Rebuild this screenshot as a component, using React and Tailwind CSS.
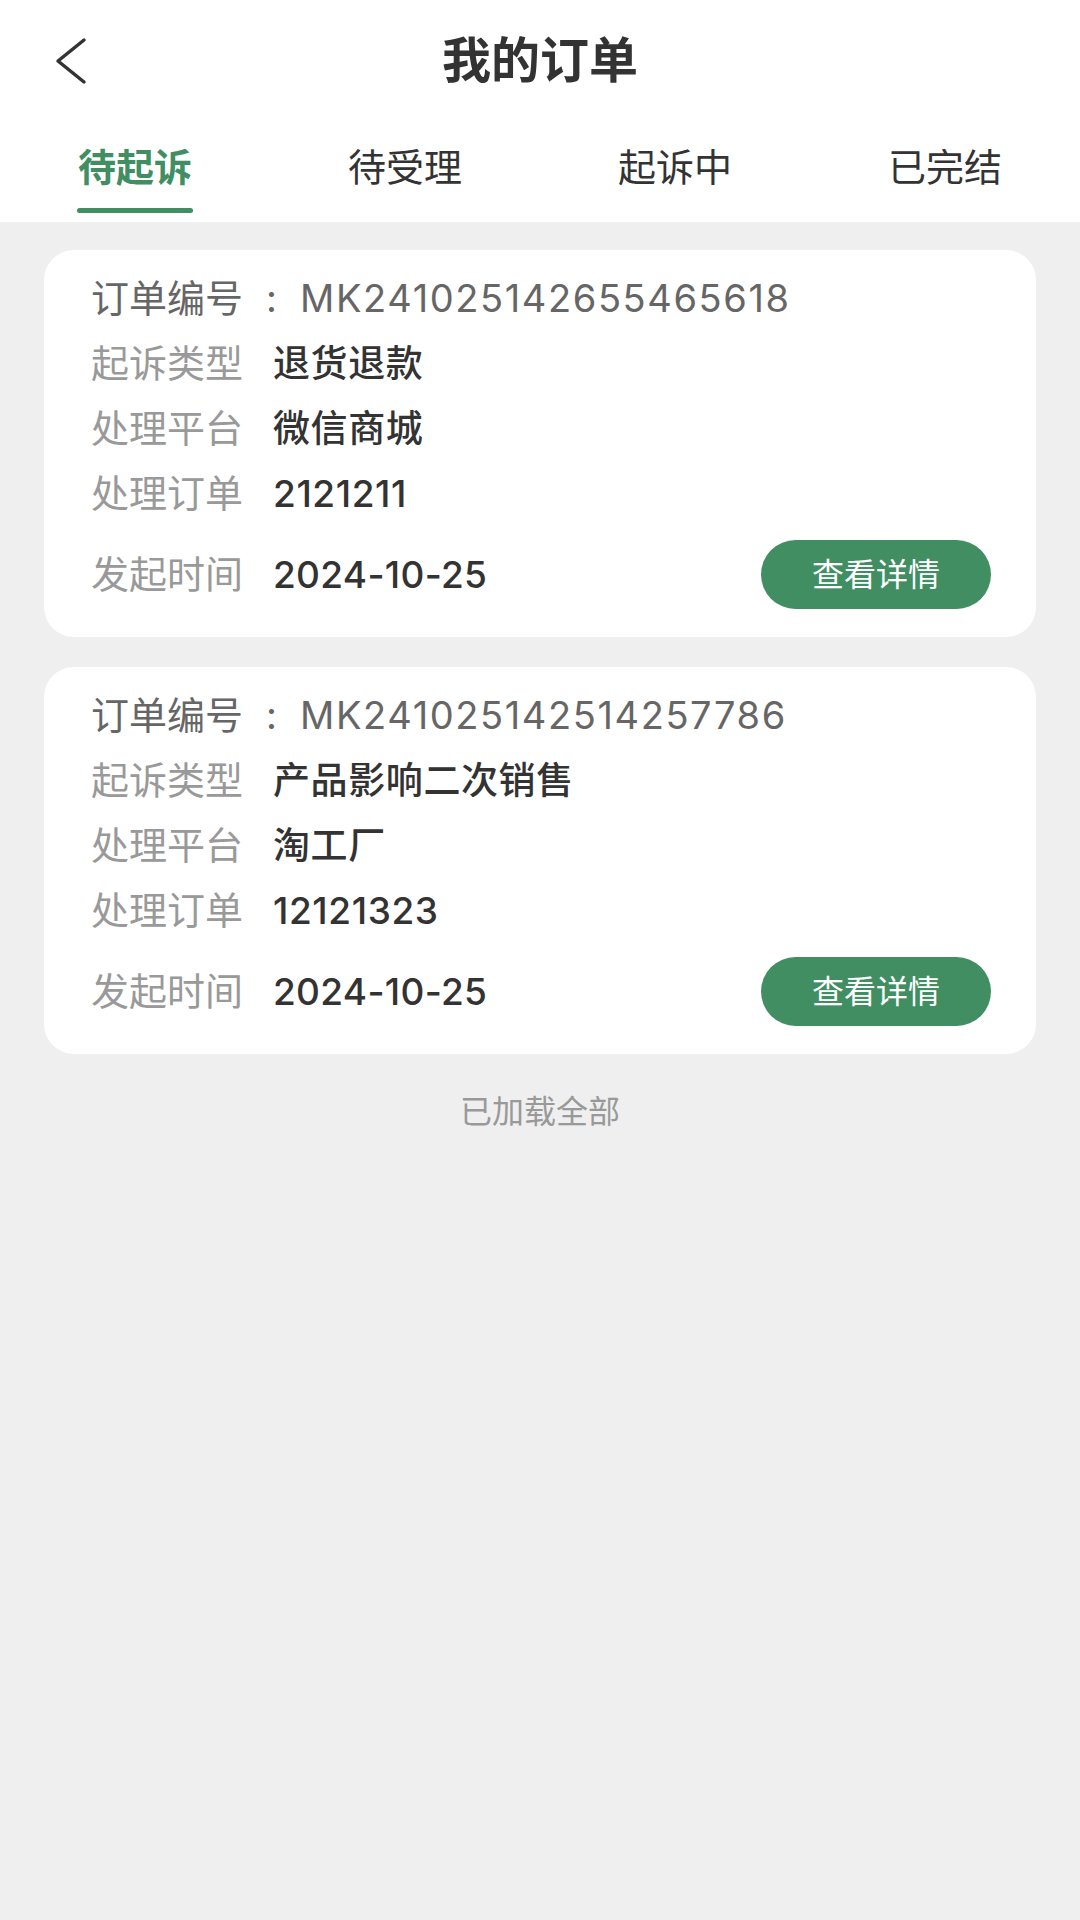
import React from 'react';

const tabs = ['待起诉', '待受理', '起诉中', '已完结'];

const orders = [
  {
    no: 'MK241025142655465618',
    type: '退货退款',
    platform: '微信商城',
    order: '2121211',
    time: '2024-10-25',
  },
  {
    no: 'MK241025142514257786',
    type: '产品影响二次销售',
    platform: '淘工厂',
    order: '12121323',
    time: '2024-10-25',
  },
];

const Row = ({ label, value }) => (
  <div className="flex h-[65px] items-center">
    <span className="w-[182px] shrink-0 text-[38px] text-[#999999]">{label}</span>
    <span className="text-[37px] font-medium tracking-[0.6px] text-[#333333]">{value}</span>
  </div>
);

const OrderCard = ({ item }) => (
  <div className="rounded-[30px] bg-white pb-[28px] pl-[47px] pr-[45px] pt-[16px]">
    <div className="flex h-[65px] items-center text-[38px] text-[#666666]">
      <span className="w-[152px] shrink-0">订单编号</span>
      <span className="w-[57px] shrink-0 text-center">:</span>
      <span className="tracking-[1.6px]">{item.no}</span>
    </div>
    <Row label="起诉类型" value={item.type} />
    <Row label="处理平台" value={item.platform} />
    <Row label="处理订单" value={item.order} />
    <div className="mt-[14px] flex h-[69px] items-center justify-between">
      <div className="flex items-center">
        <span className="w-[182px] shrink-0 text-[38px] text-[#999999]">发起时间</span>
        <span className="text-[37px] font-medium tracking-[0.3px] text-[#333333]">{item.time}</span>
      </div>
      <button className="flex h-[69px] w-[230px] items-center justify-center rounded-full bg-[#418e63] text-[32px] text-white">
        查看详情
      </button>
    </div>
  </div>
);

export default function App() {
  return (
    <div
      className="min-h-[1920px] w-[1080px] bg-[#efefef]"
      style={{ fontFamily: 'Inter, "Noto Sans CJK SC", "Noto Sans", sans-serif' }}
    >
      {/* Header */}
      <div className="bg-white">
        <div className="relative flex h-[122px] items-center justify-center">
          <svg
            className="absolute left-[52px] top-[37px]"
            width="36"
            height="48"
            viewBox="0 0 36 48"
            fill="none"
          >
            <path d="M32 3 L6 24 L32 45" stroke="#333333" strokeWidth="3.5" strokeLinecap="round" strokeLinejoin="round" />
          </svg>
          <h1 className="text-[49px] font-bold text-[#333333]">我的订单</h1>
        </div>
        <div className="grid h-[100px] grid-cols-4">
          {tabs.map((t, i) => (
            <div key={t} className="flex flex-col items-center pt-[24px]">
              <span
                className={
                  i === 0
                    ? 'text-[38px] font-bold leading-[42px] text-[#418e63]'
                    : 'text-[38px] leading-[42px] text-[#333333]'
                }
              >
                {t}
              </span>
              {i === 0 && <div className="mt-[20px] h-[5px] w-[116px] rounded-full bg-[#418e63]" />}
            </div>
          ))}
        </div>
      </div>

      {/* List */}
      <div className="flex flex-col gap-[30px] px-[44px] pt-[28px]">
        {orders.map((o) => (
          <OrderCard key={o.no} item={o} />
        ))}
      </div>
      <div className="mt-[40px] text-center text-[32px] leading-[36px] text-[#999999]">已加载全部</div>
    </div>
  );
}
